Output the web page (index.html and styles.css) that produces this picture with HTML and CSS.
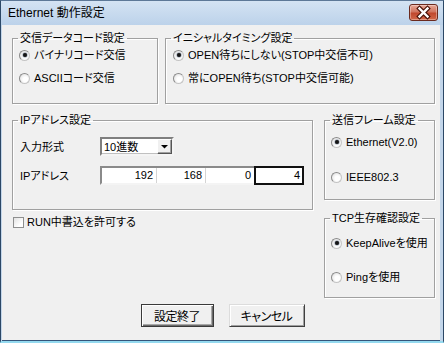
FILE: index.html
```html
<!DOCTYPE html>
<html lang="ja">
<head>
<meta charset="utf-8">
<title>Ethernet 動作設定</title>
<link rel="stylesheet" href="styles.css">
</head>
<body>
<div class="window">
  <div class="titlebar">
    <span class="title">Ethernet 動作設定</span>
    <span class="close" aria-label="閉じる">
      <svg width="29" height="17" viewBox="0 0 29 17">
        <path d="M10.5 4.5 L18.5 12.5 M18.5 4.5 L10.5 12.5" stroke="#4a1208" stroke-width="4.6" stroke-linecap="square" fill="none"/>
        <path d="M10.5 4.5 L18.5 12.5 M18.5 4.5 L10.5 12.5" stroke="#ffffff" stroke-width="2.4" stroke-linecap="square" fill="none"/>
      </svg>
    </span>
  </div>
  <div class="frame">
    <div class="client">
      <div class="row-top">
        <fieldset class="group g-code">
          <legend>交信データコード設定</legend>
          <div class="body b-top">
            <label class="radio"><span class="rb on"></span>バイナリコード交信</label>
            <label class="radio"><span class="rb"></span>ASCIIコード交信</label>
          </div>
        </fieldset>
        <fieldset class="group g-init">
          <legend>イニシャルタイミング設定</legend>
          <div class="body b-top b-init">
            <label class="radio"><span class="rb on"></span>OPEN待ちにしない(STOP中交信不可)</label>
            <label class="radio"><span class="rb"></span>常にOPEN待ち(STOP中交信可能)</label>
          </div>
        </fieldset>
      </div>
      <div class="row-mid">
        <div class="col-left">
          <fieldset class="group g-ip">
            <legend>IPアドレス設定</legend>
            <div class="body b-ip">
              <div class="form-row">
                <span class="flabel">入力形式</span>
                <div class="select">
                  <span class="sel-text">10進数</span>
                  <span class="sel-btn">
                    <svg width="13" height="13" viewBox="0 0 13 13"><polygon points="3,5 10,5 6.5,8.5" fill="#000"/></svg>
                  </span>
                </div>
              </div>
              <div class="form-row">
                <span class="flabel">IPアドレス</span>
                <div class="ipbox">
                  <span class="oct o1">192</span>
                  <span class="oct o2">168</span>
                  <span class="oct o3">0</span>
                  <span class="oct o4 focus">4</span>
                </div>
              </div>
            </div>
          </fieldset>
          <label class="check"><span class="cb"></span>RUN中書込を許可する</label>
        </div>
        <div class="col-right">
          <fieldset class="group g-frame">
            <legend>送信フレーム設定</legend>
            <div class="body b-frame">
              <label class="radio"><span class="rb on"></span>Ethernet(V2.0)</label>
              <label class="radio"><span class="rb"></span>IEEE802.3</label>
            </div>
          </fieldset>
          <fieldset class="group g-tcp">
            <legend>TCP生存確認設定</legend>
            <div class="body b-tcp">
              <label class="radio"><span class="rb on"></span>KeepAliveを使用</label>
              <label class="radio"><span class="rb"></span>Pingを使用</label>
            </div>
          </fieldset>
        </div>
      </div>
      <div class="buttons">
        <span class="btn btn-ok">設定終了</span>
        <span class="btn btn-cancel">キャンセル</span>
      </div>
    </div>
  </div>
</div>
</body>
</html>
```
FILE: styles.css
```css
* { box-sizing: border-box; }
html, body { margin: 0; padding: 0; }
body {
  width: 444px;
  height: 343px;
  overflow: hidden;
  font-family: "Liberation Sans", "Noto Sans CJK JP", sans-serif;
  font-size: 11px;
  color: #000;
  font-feature-settings: "palt";
}
.window {
  width: 444px;
  height: 343px;
  display: flex;
  flex-direction: column;
  border-left: 1px solid #2c4866;
  border-right: 1px solid #2c4866;
  border-top: 1px solid #5d7897;
  border-bottom: 2px solid #94d9ef;
  background: #c3d6ea;
}
.titlebar {
  height: 24px;
  flex: none;
  display: flex;
  align-items: flex-start;
  padding-left: 7px;
  background: linear-gradient(#d4e3f3, #bcd2ea);
}
.title {
  font-size: 12px;
  line-height: 14px;
  margin-top: 5px;
  font-feature-settings: normal;
}
.close {
  margin-left: auto;
  margin-right: 5px;
  margin-top: 3px;
  width: 29px;
  height: 17px;
  border: 1px solid #6b2a1e;
  border-radius: 3px;
  background: linear-gradient(#e8a898, #d07560 45%, #c0482e 55%, #d2684a);
  box-shadow: inset 0 0 0 1px rgba(255,255,255,0.35);
  display: flex;
  align-items: center;
  justify-content: center;
  overflow: hidden;
}
.close svg { display: block; margin: -1px; }
.frame {
  flex: 1;
  display: flex;
  padding: 0 3px 0 1px;
}
.client {
  flex: 1;
  background: #f0f0f0;
  border-bottom: 1px solid #35557a;
  padding: 6px 4px 0 10px;
  display: flex;
  flex-direction: column;
}
.row-top { display: flex; gap: 7px; }
.group {
  margin: 0;
  padding: 0 5px;
  min-width: 0;
  border: 1px solid #a0a0a0;
  box-shadow: inset 1px 1px 0 #fff, 1px 1px 0 #fff;
}
.group legend {
  padding: 0 2px;
  line-height: 14px;
  height: 14px;
}
.body { display: flex; flex-direction: column; }
.g-code { width: 146px; height: 73px; }
.g-init { width: 270px; height: 73px; }
.b-top { padding-top: 3px; gap: 9px; }
.b-init { padding-left: 1px; }
.radio {
  display: flex;
  align-items: center;
  height: 14px;
  line-height: 14px;
  white-space: nowrap;
}
.rb {
  width: 11px;
  height: 11px;
  flex: none;
  margin-right: 4px;
  margin-left: 1px;
  border-radius: 50%;
  border: 1px solid #8b8b8b;
  border-right-color: #c4c4c4;
  border-bottom-color: #c4c4c4;
  background: radial-gradient(circle at 60% 60%, #ffffff 30%, #e4e4e4 80%, #d0d0d0);
  display: flex;
  align-items: center;
  justify-content: center;
}
.rb.on::after {
  content: "";
  width: 4px;
  height: 4px;
  border-radius: 50%;
  background: #151515;
  box-shadow: 0 0 1px 0.5px rgba(40,60,90,0.6);
}
.row-mid {
  display: flex;
  gap: 11px;
  align-items: flex-start;
  margin-top: 9px;
}
.col-left { width: 301px; display: flex; flex-direction: column; }
.col-right { width: 111px; display: flex; flex-direction: column; }
.g-ip { height: 97px; }
.b-ip { padding: 10px 0 0 2px; gap: 10px; }
.form-row { display: flex; align-items: center; height: 19px; }
.flabel { width: 80px; flex: none; line-height: 14px; }
.select {
  width: 74px;
  height: 19px;
  background: #fff;
  border: 2px solid;
  border-color: #7f7f7f #f4f4f4 #f4f4f4 #7f7f7f;
  box-shadow: -1px -1px 0 #c0c0c0 inset;
  display: flex;
  align-items: center;
}
.sel-text { flex: 1; padding-left: 2px; line-height: 14px; }
.sel-btn {
  width: 15px;
  height: 15px;
  background: #f0f0f0;
  border: 1px solid;
  border-color: #ffffff #555 #555 #ffffff;
  box-shadow: inset -1px -1px 0 #a0a0a0;
  display: flex;
  align-items: center;
  justify-content: center;
}
.ipbox {
  width: 204px;
  height: 19px;
  background: #fff;
  border: 2px solid;
  border-color: #8a8a8a #f4f4f4 #f4f4f4 #8a8a8a;
  display: flex;
}
.oct {
  text-align: right;
  padding-right: 3px;
  line-height: 15px;
  border-right: 1px solid #d4d4d4;
}
.o1 { width: 55px; }
.o2 { width: 49px; }
.o3 { width: 48px; border-right: none; }
.o4 { flex: 1; border-right: none; }
.oct.focus {
  border: 2px solid #111;
  margin: -2px -2px -2px 0;
  line-height: 15px;
  padding-right: 2px;
}
.check {
  display: flex;
  align-items: center;
  height: 12px;
  margin-top: 6px;
  padding-left: 1px;
  line-height: 14px;
  white-space: nowrap;
}
.cb {
  width: 11px;
  height: 11px;
  flex: none;
  margin-right: 3px;
  border: 1px solid #8e8f8f;
  background: linear-gradient(135deg, #e2e2e2, #ffffff 70%);
}
.g-frame { height: 87px; }
.b-frame { padding-top: 8px; gap: 21px; }
.g-tcp { height: 87px; margin-top: 11px; }
.b-tcp { padding-top: 11px; gap: 20px; }
.buttons {
  display: flex;
  justify-content: center;
  gap: 15px;
  margin-top: 6px;
  padding-right: 3px;
}
.btn {
  height: 23px;
  display: flex;
  align-items: center;
  justify-content: center;
  font-size: 12px;
  letter-spacing: -0.5px;
  background: #f0f0f0;
}
.btn-ok {
  width: 73px;
  border: 1px solid #3a3a3a;
  box-shadow: inset 1px 1px 0 #fff, inset -1px -1px 0 #6a6a6a, inset -2px -2px 0 #a8a8a8;
}
.btn-cancel {
  width: 76px;
  border: 1px solid;
  border-color: #dcdcdc #404040 #404040 #dcdcdc;
  box-shadow: inset 1px 1px 0 #fff, inset -1px -1px 0 #a0a0a0;
}
```
